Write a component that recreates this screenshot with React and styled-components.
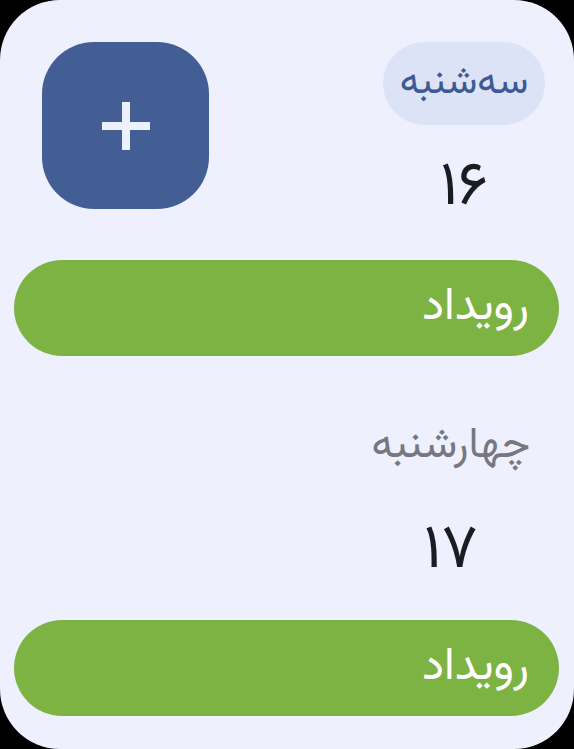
import React from "react";
import styled, { createGlobalStyle } from "styled-components";

const Global = createGlobalStyle`
  html, body { margin: 0; padding: 0; background: #000; }
  body { font-family: "Vazirmatn", "Noto Sans Arabic", "DejaVu Sans", sans-serif; }
`;

const Frame = styled.div`
  width: 574px;
  height: 749px;
  box-sizing: border-box;
  background: #eef1fd;
  border-radius: 60px;
  overflow: hidden;
  padding: 42px 15px 0 14px;
  display: flex;
  flex-direction: column;
`;

const Section = styled.section`
  display: flex;
  flex-direction: column;
  margin-top: ${(p) => p.$top || 0}px;
`;

const Header = styled.div`
  display: flex;
  flex-direction: row-reverse;
  justify-content: space-between;
  align-items: flex-start;
  padding: 0 14px 0 28px;
`;

const DayColumn = styled.div`
  display: flex;
  flex-direction: column;
  align-items: center;
  direction: rtl;
`;

const DayName = styled.div`
  height: 83px;
  min-width: ${(p) => (p.$active ? 162 : 0)}px;
  box-sizing: border-box;
  padding: 0 ${(p) => (p.$active ? 16 : 15)}px;
  border-radius: 42px;
  display: flex;
  align-items: center;
  justify-content: center;
  line-height: 1;
  font-size: ${(p) => (p.$active ? 39 : 43)}px;
  background: ${(p) => (p.$active ? "#dce3f6" : "transparent")};
  color: ${(p) => (p.$active ? "#3e5994" : "#76777f")};
`;

const DayNumber = styled.div`
  margin-top: 25px;
  height: 70px;
  box-sizing: border-box;
  padding-top: 8px;
  line-height: 62px;
  font-size: 62px;
  color: #1b1c22;
`;

const AddButton = styled.button`
  width: 167px;
  height: 167px;
  border: none;
  border-radius: 52px;
  background: #435d95;
  display: flex;
  align-items: center;
  justify-content: center;
  padding: 0;
  cursor: pointer;
`;

const EventBar = styled.div`
  margin-top: ${(p) => p.$gap}px;
  height: 96px;
  border-radius: 48px;
  background: #7db343;
  color: #fff;
  direction: rtl;
  display: flex;
  align-items: center;
  padding: 0 30px;
  line-height: 1;
  font-size: 46px;
`;

const PlusIcon = () => (
  <svg width="50" height="50" viewBox="0 0 50 50">
    <path d="M25 1 V49 M1 25 H49" stroke="#eef1fd" strokeWidth="8" fill="none" />
  </svg>
);

export default function App() {
  return (
    <>
      <Global />
      <Frame>
        <Section>
          <Header>
            <DayColumn>
              <DayName $active>سه‌شنبه</DayName>
              <DayNumber>۱۶</DayNumber>
            </DayColumn>
            <AddButton aria-label="افزودن">
              <PlusIcon />
            </AddButton>
          </Header>
          <EventBar $gap={40}>رویداد</EventBar>
        </Section>
        <Section $top={49}>
          <Header>
            <DayColumn>
              <DayName>چهارشنبه</DayName>
              <DayNumber>۱۷</DayNumber>
            </DayColumn>
          </Header>
          <EventBar $gap={37}>رویداد</EventBar>
        </Section>
      </Frame>
    </>
  );
}
